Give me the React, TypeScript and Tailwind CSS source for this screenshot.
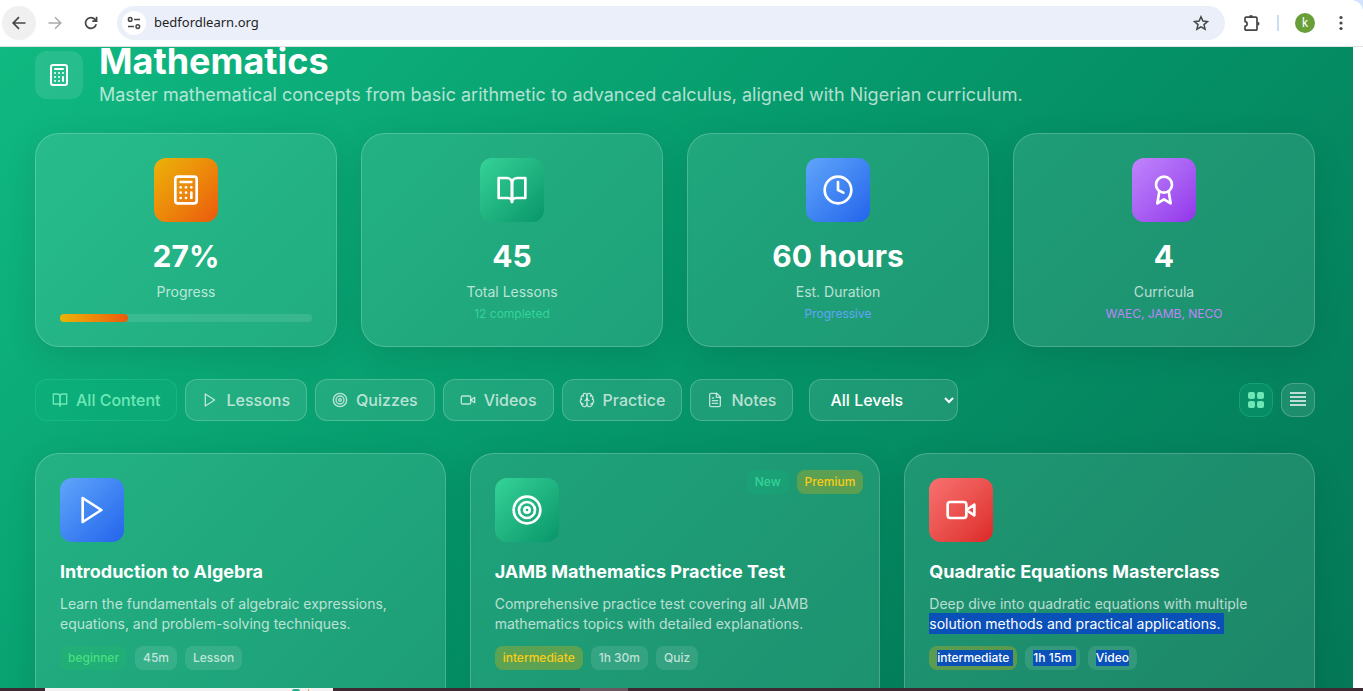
import { useState } from "react";
import type { ReactNode } from "react";
import { Brain, Calculator, Clock, Target } from "lucide-react";

type IconProps = { size?: number };

const Stroke = ({ size = 24, children }: IconProps & { children: ReactNode }) => (
  <svg
    width={size}
    height={size}
    viewBox="0 0 24 24"
    fill="none"
    stroke="currentColor"
    strokeWidth="2"
    strokeLinecap="round"
    strokeLinejoin="round"
  >
    {children}
  </svg>
);

const Play = ({ size }: IconProps) => (
  <Stroke size={size}>
    <polygon points="5 3 19 12 5 21 5 3" />
  </Stroke>
);

const Book = ({ size }: IconProps) => (
  <Stroke size={size}>
    <path d="M2 3h6a4 4 0 0 1 4 4v14a3 3 0 0 0-3-3H2z" />
    <path d="M22 3h-6a4 4 0 0 0-4 4v14a3 3 0 0 1 3-3h7z" />
  </Stroke>
);

const Camera = ({ size }: IconProps) => (
  <Stroke size={size}>
    <path d="m22 8-6 4 6 4V8Z" />
    <rect x="2" y="6" width="14" height="12" rx="2" />
  </Stroke>
);

const Ribbon = ({ size }: IconProps) => (
  <Stroke size={size}>
    <circle cx="12" cy="8" r="6" />
    <path d="M15.477 12.89 17 22l-5-3-5 3 1.523-9.11" />
  </Stroke>
);

const Note = ({ size }: IconProps) => (
  <Stroke size={size}>
    <path d="M14.500 2H6a2 2 0 0 0-2 2v16a2 2 0 0 0 2 2h12a2 2 0 0 0 2-2V7.500L14.500 2z" />
    <path d="M14 2v6h6M16 13H8M16 17H8M10 9H8" />
  </Stroke>
);

const glass = "border border-white/20 bg-white/10";

const stats = [
  {
    value: "27%",
    label: "Progress",
    icon: Calculator,
    tile: "from-[#eab308] to-[#ea580c]",
    progress: 27,
  },
  {
    value: "45",
    label: "Total Lessons",
    note: "12 completed",
    noteColor: "text-[#34d399]",
    icon: Book,
    tile: "from-[#34d399] to-[#059669]",
  },
  {
    value: "60 hours",
    label: "Est. Duration",
    note: "Progressive",
    noteColor: "text-[#60a5fa]",
    icon: Clock,
    tile: "from-[#60a5fa] to-[#2563eb]",
  },
  {
    value: "4",
    label: "Curricula",
    note: "WAEC, JAMB, NECO",
    noteColor: "text-[#c084fc]",
    icon: Ribbon,
    tile: "from-[#c084fc] to-[#9333ea]",
  },
];

const filters = [
  { name: "All Content", icon: Book },
  { name: "Lessons", icon: Play },
  { name: "Quizzes", icon: Target },
  { name: "Videos", icon: Camera },
  { name: "Practice", icon: Brain },
  { name: "Notes", icon: Note },
];

const lessons = [
  {
    title: "Introduction to Algebra",
    text: "Learn the fundamentals of algebraic expressions, equations, and problem-solving techniques.",
    level: "beginner",
    time: "45m",
    kind: "Lesson",
    icon: Play,
    tile: "from-[#60a5fa] to-[#2563eb]",
  },
  {
    title: "JAMB Mathematics Practice Test",
    text: "Comprehensive practice test covering all JAMB mathematics topics with detailed explanations.",
    level: "intermediate",
    time: "1h 30m",
    kind: "Quiz",
    icon: Target,
    tile: "from-[#34d399] to-[#059669]",
    isNew: true,
    premium: true,
  },
  {
    title: "Quadratic Equations Masterclass",
    text: "Deep dive into quadratic equations with multiple ",
    selected: "solution methods and practical applications.",
    level: "intermediate",
    time: "1h 15m",
    kind: "Video",
    icon: Camera,
    tile: "from-[#f87171] to-[#dc2626]",
  },
];

const badgeColors: Record<string, string> = {
  beginner: "bg-[#22c55e]/20 text-[#4ade80]",
  intermediate: "bg-[#eab308]/30 text-[#facc15]",
  plain: "bg-white/10 text-white/70",
  fresh: "bg-[#10b981]/20 text-[#34d399]",
};

const Badge = ({ color, children }: { color: string; children: ReactNode }) => (
  <span
    className={`rounded-lg px-2 py-1 text-xs font-medium ${badgeColors[color]}`}
  >
    {children}
  </span>
);

// highlighted run of text inside a badge, optionally with the trailing space
const Picked = ({ last, children }: { last?: boolean; children: ReactNode }) => (
  <span
    className={`block bg-[#0a50b9] text-white ${last ? "" : "-mr-1 pr-1"}`}
  >
    {children}
  </span>
);

const BrowserBar = () => (
  <div className="bg-[#d3e3fd]">
    <div className="flex h-[47px] items-center rounded-tr-xl border-b border-[#dfe1e5] bg-white pr-[14px] pl-[2px] text-[#444746]">
      <button
        aria-label="Back"
        className="flex size-[34px] items-center justify-center rounded-full bg-[#f0f0f0]"
      >
        <svg width="14" height="14" viewBox="0 0 14 14" fill="none" stroke="currentColor" strokeWidth="1.7">
          <path d="M13.5 7H1.5M7 1.2 1.2 7 7 12.8" />
        </svg>
      </button>
      <button
        aria-label="Forward"
        className="ml-[2px] flex size-[34px] items-center justify-center text-[#a9abab]"
      >
        <svg width="14" height="14" viewBox="0 0 14 14" fill="none" stroke="currentColor" strokeWidth="1.5">
          <path d="M.5 7h12M7 1.2 12.8 7 7 12.8" />
        </svg>
      </button>
      <button
        aria-label="Reload"
        className="ml-[2px] flex size-[34px] items-center justify-center"
      >
        <svg width="14" height="14" viewBox="0 0 14 14" fill="none" stroke="currentColor" strokeWidth="1.7">
          <path d="M12.2 8.2A5.4 5.4 0 1 1 11 3.4l1.4 1.4M12.6.8v4.3H8.3" />
        </svg>
      </button>
      <div className="ml-[9px] flex h-[34px] flex-1 items-center rounded-full bg-[#ebeff9] pr-4 pl-[5px]">
        <button
          aria-label="Site information"
          className="flex size-6 items-center justify-center rounded-full bg-white"
        >
          <svg width="14" height="14" viewBox="0 0 14 14" fill="none" stroke="currentColor" strokeWidth="1.5">
            <circle cx="3.2" cy="3.4" r="1.8" />
            <path d="M7 3.4h6M1 10.6h6" />
            <circle cx="10.8" cy="10.6" r="1.8" />
          </svg>
        </button>
        <input
          aria-label="Address"
          defaultValue="bedfordlearn.org"
          className="ml-2 flex-1 bg-transparent font-['Noto_Sans',sans-serif] text-[13px] text-[#1f1f1f] outline-none"
        />
        <button aria-label="Bookmark this page">
          <svg width="16" height="16" viewBox="0 0 16 16" fill="none" stroke="currentColor" strokeWidth="1.5">
            <path d="m8 1.8 1.9 4.3 4.6.4-3.5 3.1 1.1 4.6L8 11.8l-4.1 2.4L5 9.6 1.5 6.5l4.6-.4z" />
          </svg>
        </button>
      </div>
      <button aria-label="Extensions" className="ml-[18px]">
        <svg width="18" height="18" viewBox="0 0 18 18">
          <path
            d="M3 3.200h10a1 1 0 0 1 1 1v11a1 1 0 0 1-1 1H3a1 1 0 0 1-1-1v-3c2.800 0 2.800-4.600 0-4.600V4.200a1 1 0 0 1 1-1z"
            fill="none"
            stroke="currentColor"
            strokeWidth="1.7"
            strokeLinejoin="round"
          />
          <path d="M6 3a2 2 0 0 1 4 0zM14.500 7.800a2 2 0 0 1 0 4z" fill="currentColor" />
        </svg>
      </button>
      <span className="mx-4 h-4 w-[2px] bg-[#c9dcf8]" />
      <button
        aria-label="Profile"
        className="flex size-5 items-center justify-center rounded-full bg-[#689f38] font-[Roboto,sans-serif] text-xs text-white"
      >
        k
      </button>
      <button aria-label="Menu" className="ml-[18px] flex w-4 justify-center">
        <svg width="4" height="16" viewBox="0 0 4 16" fill="currentColor">
          <circle cx="2" cy="2.5" r="1.6" />
          <circle cx="2" cy="8" r="1.6" />
          <circle cx="2" cy="13.5" r="1.6" />
        </svg>
      </button>
    </div>
  </div>
);

const Tile = ({ color, children }: { color: string; children: ReactNode }) => (
  <div
    className={`flex size-16 items-center justify-center rounded-xl bg-linear-135 text-white ${color}`}
  >
    {children}
  </div>
);

const App = () => {
  const [active, setActive] = useState("All Content");
  const [view, setView] = useState("grid");

  const toggle = (on: boolean) =>
    on
      ? "border border-[#34d399]/30 bg-[#10b981]/20 text-[#6ee7b7]"
      : `${glass} text-white/70`;

  return (
    <div className="flex h-screen flex-col overflow-hidden bg-white font-[Inter,sans-serif]">
      <BrowserBar />
      <main className="mr-[10px] min-h-0 flex-1 overflow-hidden bg-linear-135 from-[#10b981] via-[#059669] to-[#047857] pr-[38px] pl-[35px]">
        <header className="flex items-start gap-4">
          <div className="mt-1 flex size-12 items-center justify-center rounded-xl bg-white/10 text-white">
            <Calculator size={24} />
          </div>
          <div>
            <h1 className="text-4xl leading-7 font-bold text-white">
              Mathematics
            </h1>
            <p className="mt-[6px] text-lg text-white/70">
              Master mathematical concepts from basic arithmetic to advanced
              calculus, aligned with Nigerian curriculum.
            </p>
          </div>
        </header>

        <section className="mt-6 grid grid-cols-4 gap-6">
          {stats.map(
            ({ value, label, note, noteColor, icon: Icon, tile, progress }) => (
              <div
                key={label}
                className={`flex flex-col items-center rounded-3xl p-6 shadow-[0_8px_32px_rgba(0,0,0,0.1)] ${glass}`}
              >
                <Tile color={tile}>
                  <Icon size={32} />
                </Tile>
                <div className="mt-4 mb-2 text-3xl font-bold text-white">
                  {value}
                </div>
                <div className="text-sm text-white/70">{label}</div>
                {progress ? (
                  <div className="mt-3 h-2 w-full rounded-full bg-white/10">
                    <div
                      className="h-2 rounded-full bg-linear-to-r from-[#eab308] to-[#ea580c]"
                      style={{ width: `${progress}%` }}
                    />
                  </div>
                ) : (
                  <div className={`mt-1 text-xs ${noteColor}`}>{note}</div>
                )}
              </div>
            ),
          )}
        </section>

        <section className="mt-8 flex items-center justify-between">
          <div className="flex items-center gap-4">
            <div className="flex gap-2">
              {filters.map(({ name, icon: Icon }) => (
                <button
                  key={name}
                  onClick={() => setActive(name)}
                  className={`flex items-center gap-2 rounded-xl px-4 py-2 font-medium ${toggle(active === name)}`}
                >
                  <Icon size={16} />
                  {name}
                </button>
              ))}
            </div>
            <select
              aria-label="Level"
              className={`h-[42px] w-[149px] rounded-xl px-4 font-medium text-white ${glass}`}
            >
              <option>All Levels</option>
              <option>Beginner</option>
              <option>Intermediate</option>
              <option>Advanced</option>
            </select>
          </div>
          <div className="flex gap-2">
            <button
              aria-label="Grid view"
              onClick={() => setView("grid")}
              className={`rounded-xl p-2 ${toggle(view === "grid")}`}
            >
              <svg width="16" height="16" viewBox="0 0 16 16" fill="currentColor">
                <rect width="7" height="7" rx="2" />
                <rect x="9" width="7" height="7" rx="2" />
                <rect y="9" width="7" height="7" rx="2" />
                <rect x="9" y="9" width="7" height="7" rx="2" />
              </svg>
            </button>
            <button
              aria-label="List view"
              onClick={() => setView("list")}
              className={`rounded-xl p-2 ${toggle(view === "list")}`}
            >
              <svg width="16" height="16" viewBox="0 0 16 16" fill="currentColor">
                <path d="M0 0h16v2H0zM0 4h16v2H0zM0 8h16v2H0zM0 12h16v2H0z" />
              </svg>
            </button>
          </div>
        </section>

        <section className="mt-8 grid grid-cols-3 gap-6">
          {lessons.map((lesson) => (
            <article
              key={lesson.title}
              className={`relative rounded-3xl p-6 pb-20 shadow-[0_8px_32px_rgba(0,0,0,0.1)] ${glass}`}
            >
              <div className="absolute top-4 right-4 flex gap-2">
                {lesson.isNew && <Badge color="fresh">New</Badge>}
                {lesson.premium && <Badge color="intermediate">Premium</Badge>}
              </div>
              <Tile color={lesson.tile}>
                <lesson.icon size={32} />
              </Tile>
              <h3 className="mt-4 mb-2 text-lg font-bold text-white">
                {lesson.title}
              </h3>
              <p className="text-sm text-white/70">
                {lesson.text}
                {lesson.selected && (
                  <span className="bg-[#0a50b9] py-[2px] pr-1 text-white">
                    {lesson.selected}
                  </span>
                )}
              </p>
              <div className="mt-3 flex gap-2">
                <Badge color={lesson.level}>
                  {lesson.selected ? <Picked>{lesson.level}</Picked> : lesson.level}
                </Badge>
                <Badge color="plain">
                  {lesson.selected ? <Picked>{lesson.time}</Picked> : lesson.time}
                </Badge>
                <Badge color="plain">
                  {lesson.selected ? <Picked last>{lesson.kind}</Picked> : lesson.kind}
                </Badge>
              </div>
            </article>
          ))}
        </section>
      </main>
      {/* top edge of the taskbar */}
      <div className="flex h-[3px] bg-[#3d2a32] pl-[45px]">
        <div className="flex w-72 justify-end gap-2 bg-[#f3f1f2] pr-6">
          <span className="mt-px w-2 rounded-t-full bg-[#2fa98c]" />
          <span className="mt-px w-px bg-[#e8a06a]" />
        </div>
        <div className="ml-[247px] w-12 bg-[#6b575f]" />
      </div>
    </div>
  );
};

export default App;
